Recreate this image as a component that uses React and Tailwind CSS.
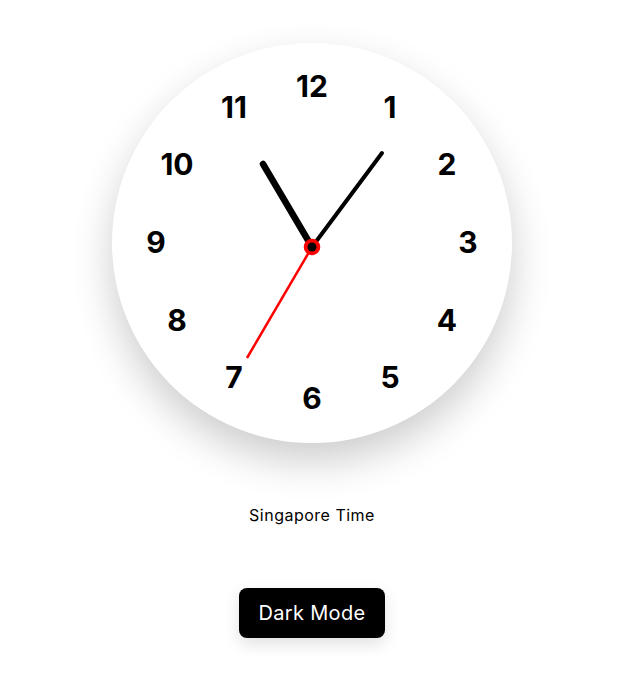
const numbers = [
  { n: 12, pos: 'left-[200px] top-[43px]' },
  { n: 1, pos: 'left-[278px] top-[64px]' },
  { n: 2, pos: 'left-[335px] top-[121px]' },
  { n: 3, pos: 'left-[356px] top-[199px]' },
  { n: 4, pos: 'left-[335px] top-[277px]' },
  { n: 5, pos: 'left-[278px] top-[334px]' },
  { n: 6, pos: 'left-[200px] top-[355px]' },
  { n: 7, pos: 'left-[122px] top-[334px]' },
  { n: 8, pos: 'left-[65px] top-[277px]' },
  { n: 9, pos: 'left-[44px] top-[199px]' },
  { n: 10, pos: 'left-[65px] top-[121px]' },
  { n: 11, pos: 'left-[122px] top-[64px]' },
]

export default function App() {
  return (
    <div className="min-h-screen bg-white flex flex-col items-center pt-[43px] pr-[6px] font-['Inter',sans-serif] text-black">
      {/* Clock */}
      <div className="relative w-[400px] h-[400px] rounded-full bg-white shadow-[0_18px_40px_rgba(0,0,0,0.2)]">
        {numbers.map(({ n, pos }) => (
          <span
            key={n}
            className={`absolute ${pos} -translate-x-1/2 -translate-y-1/2 text-[30px] leading-none font-bold`}
          >
            {n}
          </span>
        ))}
        <svg className="absolute inset-0" width="400" height="400" viewBox="0 0 400 400">
          <line x1="200" y1="204" x2="151" y2="121" stroke="#000" strokeWidth="6.5" strokeLinecap="round" />
          <line x1="200" y1="204" x2="270" y2="110" stroke="#000" strokeWidth="4" strokeLinecap="round" />
          <line x1="200" y1="204" x2="135" y2="315" stroke="#ff0000" strokeWidth="2.5" />
          <circle cx="200" cy="204" r="8.3" fill="#ff0000" />
          <circle cx="200" cy="204" r="4.5" fill="#000" />
        </svg>
      </div>

      <div className="mt-[60px] text-[16px] leading-6 tracking-[0.5px]">Singapore Time</div>

      <button className="mt-[61px] w-[146px] h-[50px] rounded-lg bg-black text-white text-[20px] tracking-[0.3px] shadow-[0_6px_16px_rgba(0,0,0,0.12)]">
        Dark Mode
      </button>
    </div>
  )
}
